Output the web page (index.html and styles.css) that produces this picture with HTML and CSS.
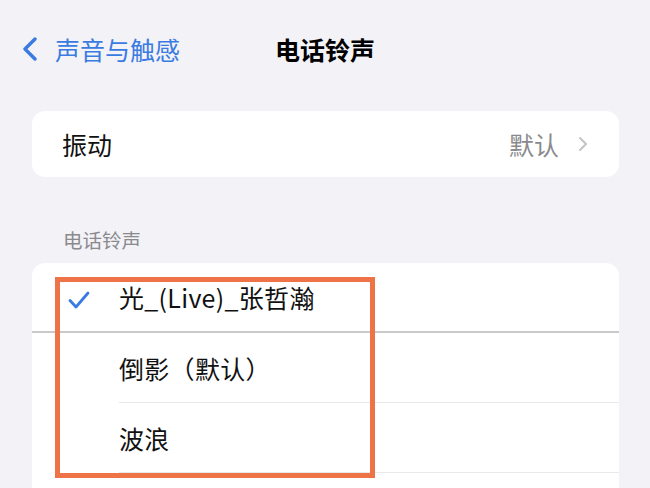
FILE: index.html
```html
<!DOCTYPE html>
<html lang="zh-CN">
  <head>
    <meta charset="UTF-8" />
    <meta name="viewport" content="width=device-width, initial-scale=1.0" />
    <title>电话铃声</title>
    <link rel="stylesheet" href="styles.css">
  </head>
  <body>
    <!-- ナビゲーション -->
    <nav class="nav-bar">
      <a class="back-link" href="#">
        <svg class="back-icon" width="16" height="24" viewBox="0 0 16 24">
          <path d="M13 2 L3 12 L13 22" fill="none" stroke="currentColor" stroke-width="3.4" stroke-linecap="round" stroke-linejoin="round" />
        </svg>
        <span>声音与触感</span>
      </a>
      <h1 class="nav-title">电话铃声</h1>
      <div></div>
    </nav>

    <main class="content">
      <div class="card">
        <div class="vibrate-row">
          <span>振动</span>
          <span class="detail">
            默认
            <svg width="10" height="16" viewBox="0 0 10 16">
              <path d="M2 2 L8 8 L2 14" fill="none" stroke="#c4c4c7" stroke-width="2" stroke-linecap="round" stroke-linejoin="round" />
            </svg>
          </span>
        </div>
      </div>

      <div class="section-header">电话铃声</div>

      <div class="card ringtone-list">
        <div class="tone-row selected">
          <div class="check-cell">
            <svg width="22" height="18" viewBox="0 0 22 18">
              <path d="M2 9.5 L8 16 L20 2" fill="none" stroke="#3a7be2" stroke-width="2.8" stroke-linecap="round" stroke-linejoin="round" />
            </svg>
          </div>
          <div class="tone-name">光_(Live)_张哲瀚</div>
        </div>
        <div class="tone-row">
          <div class="check-cell"></div>
          <div class="tone-name">倒影（默认）</div>
        </div>
        <div class="tone-row">
          <div class="check-cell"></div>
          <div class="tone-name">波浪</div>
        </div>

        <!-- 注釈の枠 -->
        <div class="highlight-box"></div>
      </div>
    </main>
  </body>
</html>
```

FILE: styles.css
```css
body {
  margin: 0;
  background-color: #f2f2f7;
  font-family: "Noto Sans CJK SC", "Noto Sans", sans-serif;
  color: #111;
  overflow: hidden;
}
.nav-bar {
  display: grid;
  grid-template-columns: 1fr auto 1fr;
  align-items: center;
  height: 98px;
  padding: 0 22px;
  box-sizing: border-box;
}
.back-link {
  display: flex;
  align-items: center;
  gap: 17px;
  color: #3a7be2;
  text-decoration: none;
  font-size: 25px;
  line-height: 30px;
}
.back-icon {
  flex-shrink: 0;
}
.nav-title {
  margin: 0;
  font-size: 25px;
  line-height: 30px;
  font-weight: 700;
  color: #000;
}
.content {
  padding: 0 31px 0 32px;
}
.card {
  background-color: white;
  border-radius: 13px;
}
.vibrate-row {
  display: flex;
  justify-content: space-between;
  align-items: center;
  height: 66px;
  margin-top: 13px;
  padding: 0 31px 0 30px;
  font-size: 25px;
}
.detail {
  display: flex;
  align-items: center;
  gap: 19px;
  color: #8a8a8e;
}
.section-header {
  padding: 51px 0 11px 31px;
  font-size: 19.5px;
  line-height: 24px;
  color: #8a8a8e;
}
.ringtone-list {
  position: relative;
  padding-bottom: 30px;
  border-radius: 13px 13px 0 0;
}
.tone-row {
  display: flex;
  height: 70px;
  font-size: 25px;
}
.tone-row.selected {
  height: 68px;
  border-bottom: 2px solid #c9c9cc;
}
.check-cell {
  display: flex;
  align-items: center;
  width: 87px;
  padding-left: 36px;
  padding-top: 5px;
  box-sizing: border-box;
  flex-shrink: 0;
}
.tone-name {
  flex-grow: 1;
  display: flex;
  align-items: center;
  letter-spacing: 0.3px;
}
.tone-row:not(.selected) .tone-name {
  border-bottom: 1px solid #e8e8ec;
}
.highlight-box {
  position: absolute;
  left: 23px;
  top: 14px;
  width: 320px;
  height: 201px;
  border: 5px solid #ee7448;
  box-sizing: border-box;
}
```
